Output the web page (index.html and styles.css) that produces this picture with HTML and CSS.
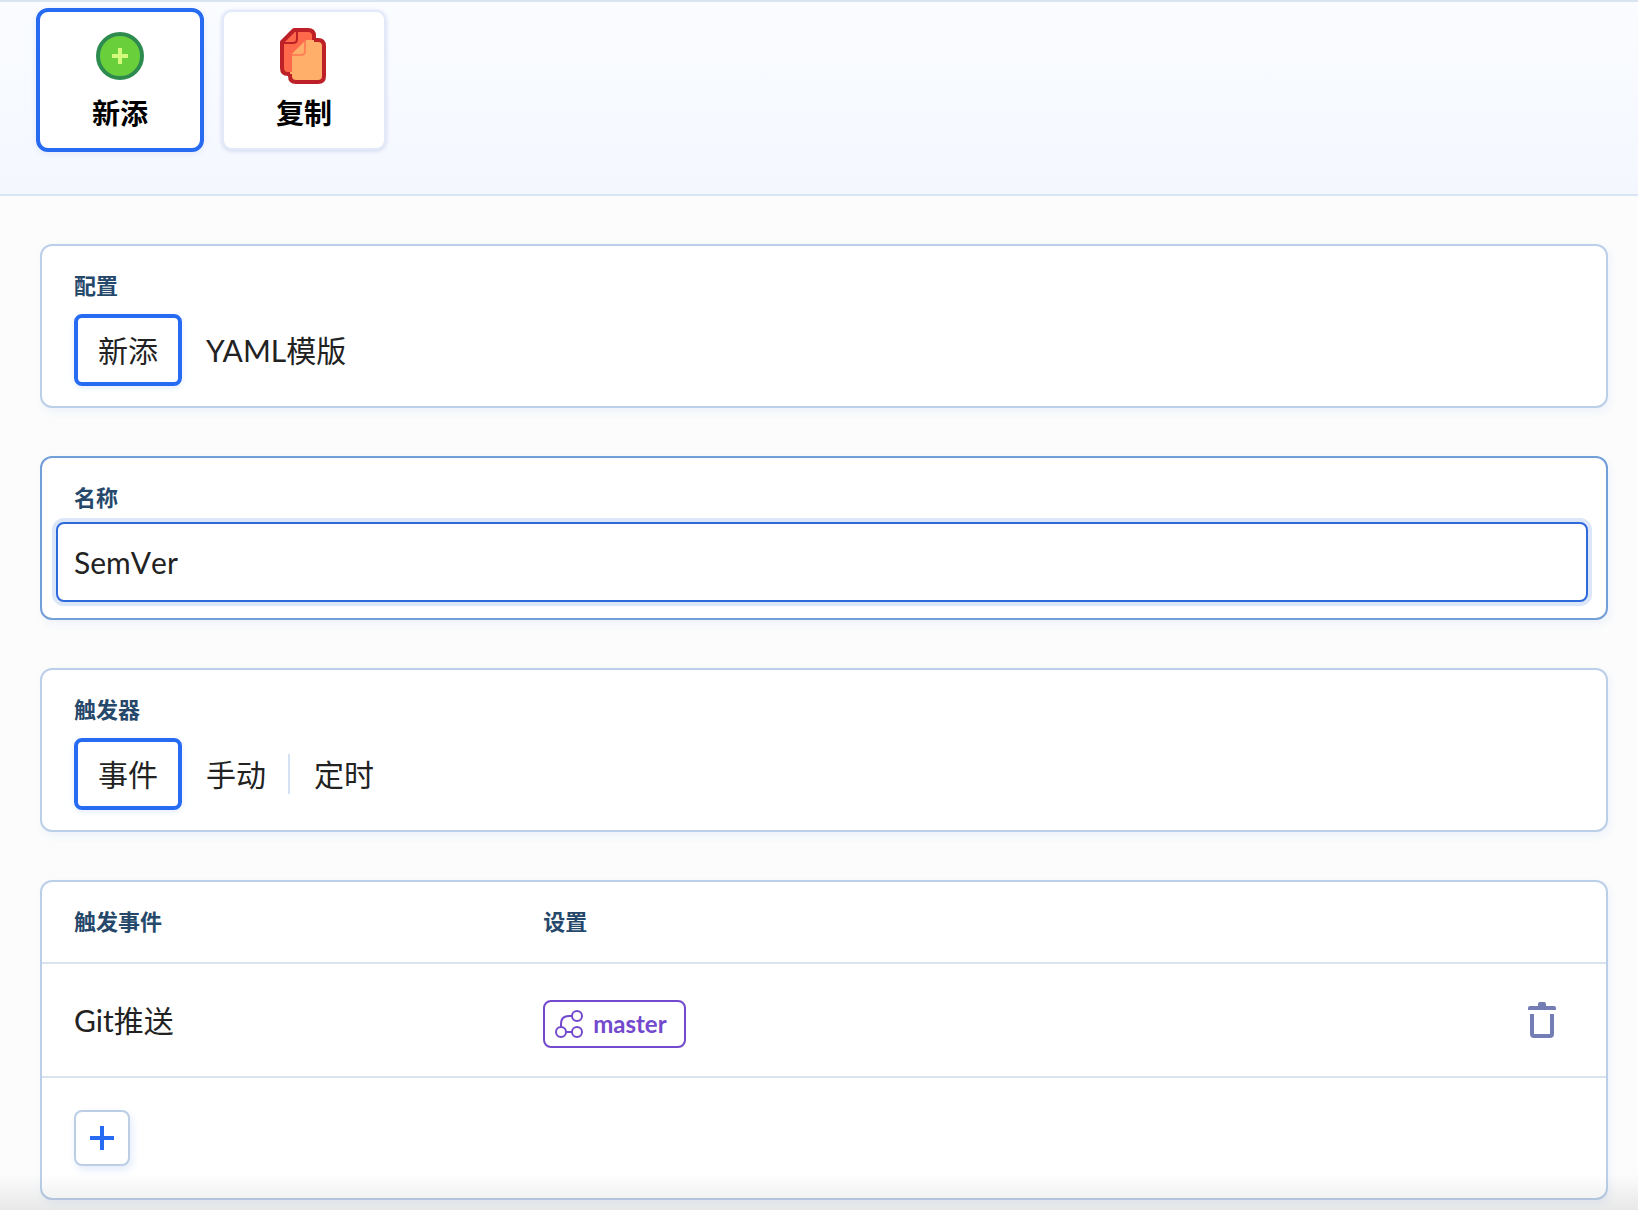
FILE: index.html
```html
<!DOCTYPE html>
<html lang="zh-CN">
<head>
<meta charset="utf-8">
<meta name="viewport" content="width=device-width, initial-scale=1">
<title>新添</title>
<link rel="stylesheet" href="styles.css">
</head>
<body>
<header class="modes">
  <button type="button" class="mode mode-active" aria-pressed="true">
    <svg class="mode-icon" width="56" height="56" viewBox="0 0 56 56" aria-hidden="true">
      <circle cx="28" cy="28" r="22" fill="#69d03c" stroke="#2e8b50" stroke-width="4"/>
      <path d="M28 20v16M20 28h16" stroke="#d2fa7d" stroke-width="4"/>
    </svg>
    <span>新添</span>
  </button>
  <button type="button" class="mode" aria-pressed="false">
    <svg class="mode-icon" width="56" height="56" viewBox="0 0 56 56" aria-hidden="true">
      <path d="M18 2h14q6 0 6 6v38H12q-6 0-6-6V14z" fill="#ff694b" stroke="#bd2127" stroke-width="4" stroke-linejoin="round"/>
      <path d="M21 3v8q0 4-4 4H7" fill="none" stroke="#bd2127" stroke-width="2"/>
      <path d="M30 12h12q6 0 6 6v30q0 6-6 6H20q-6 0-6-6V27z" fill="#ffaf69"/>
      <path d="M38 12h4q6 0 6 6v30q0 6-6 6H20q-6 0-6-6v-2" fill="none" stroke="#bd2127" stroke-width="4"/>
      <path d="M12 12h18L16 26v18h-4z" fill="#ff694b"/>
      <path d="M16 26L29 13v10q0 3-3 3z" fill="#ffaf69"/>
      <path d="M29 13v10q0 4-4 4h-9" fill="none" stroke="#ff8257" stroke-width="2"/>
      <path d="M21 10v1q0 4-4 4h-6" fill="none" stroke="#bd2127" stroke-width="2"/>
    </svg>
    <span>复制</span>
  </button>
</header>

<main class="content">
  <section class="panel">
    <div class="panel-label" id="config-label">配置</div>
    <div class="choices" role="group" aria-labelledby="config-label">
      <button type="button" class="choice choice-active" aria-pressed="true">新添</button>
      <button type="button" class="choice" aria-pressed="false">YAML模版</button>
    </div>
  </section>

  <section class="panel panel-focus">
    <label class="panel-label" for="name">名称</label>
    <div class="field"><input class="name-input" id="name" type="text" value="SemVer"></div>
  </section>

  <section class="panel">
    <div class="panel-label" id="trigger-label">触发器</div>
    <div class="choices" role="group" aria-labelledby="trigger-label">
      <button type="button" class="choice choice-active" aria-pressed="true">事件</button>
      <button type="button" class="choice" aria-pressed="false">手动</button>
      <span class="divider"></span>
      <button type="button" class="choice" aria-pressed="false">定时</button>
    </div>
  </section>

  <section class="panel panel-table">
    <table class="events">
      <thead>
        <tr><th class="col-event" scope="col">触发事件</th><th scope="col">设置</th><td class="col-action"></td></tr>
      </thead>
      <tbody>
        <tr>
          <td>Git推送</td>
          <td>
            <span class="branch">
              <svg width="28" height="28" viewBox="0 0 28 28" fill="none" stroke="#7349cd" stroke-width="2" aria-hidden="true">
                <circle cx="6" cy="22" r="5"/><circle cx="22" cy="22" r="5"/><circle cx="22" cy="6" r="5"/>
                <path d="M6 17v-3q0-8 8-8h3M11 22h6"/>
              </svg>
              <span>master</span>
            </span>
          </td>
          <td class="col-action">
            <button type="button" class="delete" aria-label="删除">
              <svg width="28" height="36" viewBox="0 0 28 36" aria-hidden="true">
                <path d="M0 8V6q0-2 2-2h8V2q0-2 2-2h4q2 0 2 2v2h8q2 0 2 2v2z" fill="#747eb5"/>
                <path d="M4 12v20q0 2 2 2h16q2 0 2-2V12" fill="none" stroke="#747eb5" stroke-width="4"/>
              </svg>
            </button>
          </td>
        </tr>
      </tbody>
    </table>
    <div class="add-row">
      <button type="button" class="add" aria-label="添加触发事件">
        <svg width="24" height="24" viewBox="0 0 24 24" aria-hidden="true"><path d="M12 0v24M0 12h24" stroke="#266bf2" stroke-width="4"/></svg>
      </button>
    </div>
  </section>
</main>
<div class="fade"></div>
</body>
</html>
```
FILE: styles.css
```css
* { box-sizing: border-box; }

body {
  margin: 0;
  background: #fcfcfc;
  color: #222;
  font: 30px/40px Lato, "Noto Sans CJK SC", sans-serif;
}

button {
  margin: 0;
  padding: 0;
  border: 0;
  background: none;
  color: inherit;
  font: inherit;
  cursor: pointer;
}

svg { display: block; flex: none; }

.modes {
  display: flex;
  align-items: center;
  gap: 16px;
  padding: 6px 36px 42px;
  border-top: 2px solid #dae5f2;
  border-bottom: 2px solid #dae5f4;
  background: linear-gradient(#fafcff, #f4f7ff);
}

.mode {
  display: flex;
  flex-direction: column;
  align-items: center;
  gap: 9px;
  width: 164px;
  height: 140px;
  margin: 2px;
  padding-top: 16px;
  border: 2px solid #e2eafa;
  border-radius: 10px;
  background: #fff;
  box-shadow: 0 1px 4px #cdd4ea;
  color: #000;
  font-size: 28px;
  font-weight: 700;
}

.mode-active {
  width: 168px;
  height: 144px;
  margin: 0;
  border: 4px solid #266bf2;
  border-radius: 12px;
  box-shadow: 0 2px 6px #e3eafa;
}

.content {
  display: flex;
  flex-direction: column;
  gap: 48px;
  padding: 48px 30px 10px 40px;
}

.panel {
  padding: 26px 32px 20px;
  border: 2px solid #bccfe9;
  border-radius: 12px;
  background: #fff;
  box-shadow: 2px 4px 8px #edf2f9;
}

.panel-label {
  display: block;
  color: #26486a;
  font-size: 22px;
  font-weight: 700;
  line-height: 28px;
}

.choices {
  display: flex;
  align-items: center;
  gap: 24px;
  margin-top: 14px;
  height: 72px;
}

.choice-active {
  height: 72px;
  padding: 0 20px;
  border: 4px solid #266bf2;
  border-radius: 8px;
  box-shadow: 0 2px 6px #e3eefa;
}

.divider {
  width: 2px;
  height: 40px;
  margin-left: -2px;
  background: #d5e2f4;
}

.panel-focus {
  padding: 26px 18px 16px 14px;
  border-color: #739fd9;
}

.panel-focus .panel-label { padding-left: 18px; }

.field { margin-top: 10px; }

.name-input {
  display: block;
  width: 100%;
  height: 80px;
  padding: 0 16px;
  border: 2px solid #2e69dc;
  border-radius: 8px;
  outline: none;
  background: #fff;
  box-shadow: 0 0 0 4px #dbe6f8;
  color: inherit;
  font: inherit;
  font-kerning: none;
}

.panel-table { padding: 0; }

.events {
  width: 100%;
  border-spacing: 0;
  table-layout: fixed;
}

.events th,
.events td {
  padding: 0 32px;
  border-bottom: 2px solid #dae2ee;
  text-align: left;
}

.events th {
  height: 82px;
  color: #26486a;
  font-size: 22px;
  font-weight: 700;
}

.events tbody td { height: 114px; }

.events .col-event { width: 30%; }

.events .col-action {
  width: 140px;
  padding: 0 50px 0 0;
}

.branch {
  display: flex;
  align-items: center;
  gap: 10px;
  width: fit-content;
  height: 48px;
  margin-top: 8px;
  padding: 0 17px 0 10px;
  border: 2px solid #7349cd;
  border-radius: 8px;
  color: #7349cd;
  font-size: 24px;
  font-weight: 700;
}

.delete { display: block; margin-left: auto; }

.add-row { padding: 32px; }

.add {
  display: grid;
  place-items: center;
  width: 56px;
  height: 56px;
  border: 2px solid #bccde6;
  border-radius: 8px;
  background: #fff;
  box-shadow: 2px 4px 8px #e3ebfa;
}

/* Shade over the lower edge of the scrolling page */
.fade {
  position: fixed;
  right: 0;
  bottom: 0;
  left: 0;
  height: 36px;
  background: linear-gradient(rgba(30, 35, 40, 0), rgba(30, 35, 40, .09));
  pointer-events: none;
}
```
